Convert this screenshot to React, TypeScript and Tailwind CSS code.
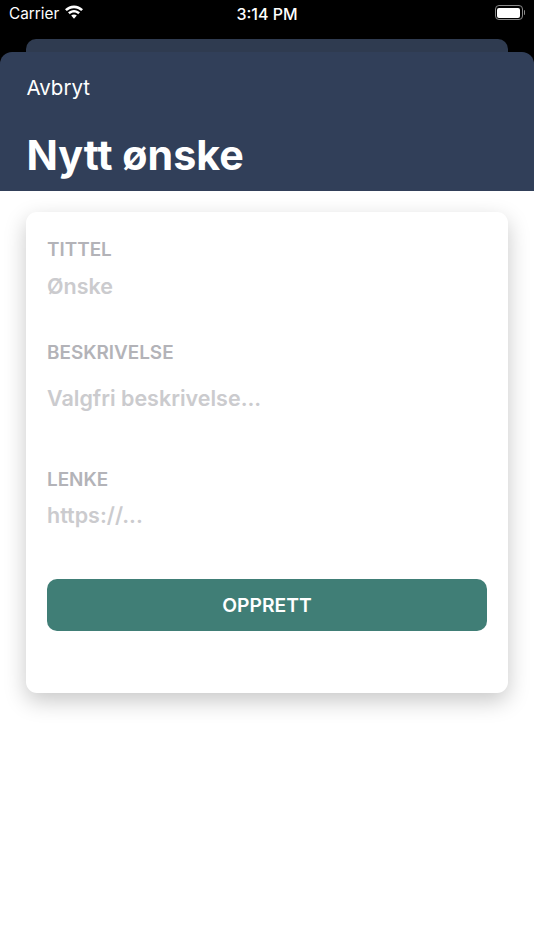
import { ReactNode } from "react";

function Label({ children, className = "" }: { children: ReactNode; className?: string }) {
  return <div className={`text-[18.9px] leading-[22px] font-semibold text-[#b3b3b8] ${className}`}>{children}</div>;
}

function Hint({ children, className = "" }: { children: ReactNode; className?: string }) {
  return <div className={`text-[21.5px] leading-[26px] font-semibold text-[#cbcbce] ${className}`}>{children}</div>;
}

function StatusBar() {
  return (
    <div className="flex h-[39px] items-start justify-between pl-[9px] pr-[9px] pt-[4px] text-white">
      <div className="flex w-[120px] items-center gap-[5px]">
        <span className="text-[15.3px] leading-[20px]">Carrier</span>
        <svg width="20" height="15" viewBox="0 0 20 15" className="-mt-[3px]" fill="white">
          <path d="M10 3.200c2.800 0 5.300 1.100 7.200 2.900l1.800-1.900C16.600 1.900 13.400.500 10 .500S3.400 1.900 1 4.200l1.800 1.900C4.700 4.300 7.200 3.200 10 3.200z" />
          <path d="M10 7.500c1.600 0 3.100.6 4.200 1.700l1.800-1.900C14.400 5.800 12.300 4.900 10 4.900S5.600 5.800 4 7.300l1.800 1.900C6.900 8.100 8.400 7.500 10 7.500z" />
          <path d="M10 9.400c-1.100 0-2.100.4-2.800 1.100L10 13.800l2.800-3.300c-.7-.7-1.700-1.100-2.800-1.100z" />
        </svg>
      </div>
      <span className="text-[16px] leading-[20px] font-medium">3:14 PM</span>
      <div className="flex w-[120px] items-center justify-end pt-[1px]">
        <div className="flex h-[15px] w-[28px] items-center rounded-[4px] border border-[#8a8a8a] p-[1.5px]">
          <div className="h-full w-full rounded-[2px] bg-white" />
        </div>
        <div className="ml-[1px] h-[5px] w-[1.5px] rounded-r-sm bg-[#8a8a8a]" />
      </div>
    </div>
  );
}

export default function App() {
  return (
    <div className="min-h-[950px] bg-white font-['Inter',sans-serif]">
      <div className="bg-black">
        <StatusBar />
        <div className="mx-[26px] h-[13px] rounded-t-[10px] bg-[#2f3b50]" />
        <div className="h-[139px] rounded-t-[12px] bg-[#313f59] px-[26.500px] pt-[24px] text-white">
          <div className="text-[20.5px] leading-[24px]">Avbryt</div>
          <div className="mt-[31px] text-[41.2px] leading-[48px] font-bold">Nytt ønske</div>
        </div>
      </div>

      <div className="mx-[26px] mt-[21px] flex h-[481px] flex-col rounded-[11px] bg-white px-[21px] pt-[27px] shadow-[0_8px_22px_rgba(0,0,0,0.22)]">
        <Label>TITTEL</Label>
        <Hint className="mt-[12px]">Ønske</Hint>
        <Label className="mt-[43px]">BESKRIVELSE</Label>
        <Hint className="mt-[21px]">Valgfri beskrivelse...</Hint>
        <Label className="mt-[58px]">LENKE</Label>
        <Hint className="mt-[11px]">https://...</Hint>
        <button className="mt-[51px] h-[52px] w-full rounded-[10px] bg-[#407e76] text-[19.3px] font-semibold text-white">
          OPPRETT
        </button>
      </div>
    </div>
  );
}
